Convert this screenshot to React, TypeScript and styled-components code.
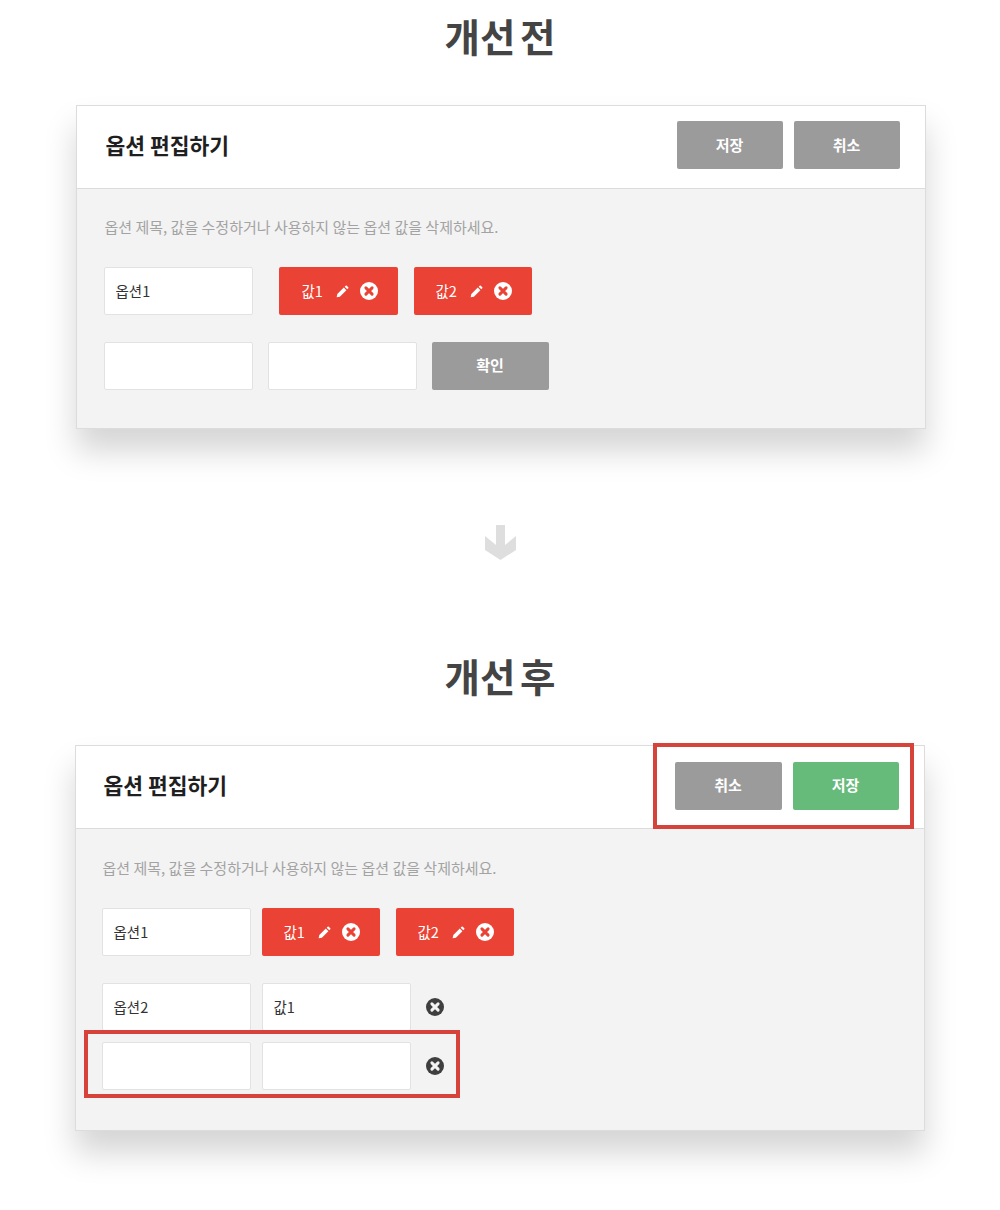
import React from 'react';
import styled, { createGlobalStyle } from 'styled-components';

const GlobalStyle = createGlobalStyle`
  html, body {
    margin: 0;
    padding: 0;
    background: #ffffff;
  }
  body {
    font-family: "Noto Sans CJK KR", "Noto Sans", sans-serif;
  }
`;

const CloseIcon: React.FC<{ $bg: string; $fg: string }> = ({ $bg, $fg }) => (
  <svg width="18" height="18" viewBox="0 0 18 18" style={{ display: 'block', flex: 'none' }}>
    <circle cx="9" cy="9" r="9" fill={$bg} />
    <path d="M5.9 5.9l6.200 6.200M12.100 5.900l-6.200 6.200" stroke={$fg} strokeWidth="3" strokeLinecap="round" />
  </svg>
);

const PencilIcon = () => (
  <svg width="13" height="13" viewBox="0 0 12 12" style={{ display: 'block', flex: 'none' }}>
    <path d="M0.600 11.400l0.600-3 6-6 2.400 2.400-6 6z" fill="#fff" />
    <path d="M8 1.600l0.900-0.900a0.800 0.800 0 0 1 1.100 0l1.300 1.300a0.800 0.800 0 0 1 0 1.100l-0.900 0.900z" fill="#fff" />
  </svg>
);

const ArrowIcon = () => (
  <svg width="31" height="35" viewBox="0 0 31 35" style={{ display: 'block' }}>
    <path d="M11 0h9v20l11-9v14l-15.500 10L0 25V11l11 9z" fill="#dedede" />
  </svg>
);

const OptionChip: React.FC<{ label: string; $width: number; $pad: number }> = ({ label, $width, $pad }) => (
  <Chip $width={$width} $pad={$pad}>
    <ChipLabel>{label}</ChipLabel>
    <PencilIcon />
    <CloseIcon $bg="#ffffff" $fg="#ea4335" />
  </Chip>
);

const DESCRIPTION = '옵션 제목, 값을 수정하거나 사용하지 않는 옵션 값을 삭제하세요.';

const App: React.FC = () => (
  <Page>
    <GlobalStyle />
    <Heading>개선 전</Heading>
    <Panel $shift={1}>
      <PanelHeader $left={29} $lift={4}>
        <PanelTitle>옵션 편집하기</PanelTitle>
        <Actions>
          <ActionButton $color="#9b9b9b">저장</ActionButton>
          <ActionButton $color="#9b9b9b">취소</ActionButton>
        </Actions>
      </PanelHeader>
      <PanelBody $top={25} $left={27} $bottom={38}>
        <Description>{DESCRIPTION}</Description>
        <FieldRow $gap={26} $mt={0}>
          <TextField readOnly value="옵션1" />
          <Chips>
            <OptionChip label="값1" $width={119} $pad={23} />
            <OptionChip label="값2" $width={118} $pad={22} />
          </Chips>
        </FieldRow>
        <FieldRow $gap={15} $mt={27}>
          <TextField readOnly value="" />
          <TextField readOnly value="" />
          <ConfirmButton>확인</ConfirmButton>
        </FieldRow>
      </PanelBody>
    </Panel>

    <ArrowWrap>
      <ArrowIcon />
    </ArrowWrap>

    <Heading $mt={80}>개선 후</Heading>
    <Panel $shift={-1}>
      <PanelHeader $left={28} $lift={3}>
        <PanelTitle>옵션 편집하기</PanelTitle>
        <Actions>
          <ActionButton $color="#9b9b9b" $width={107}>취소</ActionButton>
          <ActionButton $color="#66ba7a">저장</ActionButton>
          <HeaderHighlight />
        </Actions>
      </PanelHeader>
      <PanelBody $top={26} $left={26} $bottom={40}>
        <Description>{DESCRIPTION}</Description>
        <FieldRow $gap={11} $mt={0}>
          <TextField readOnly value="옵션1" />
          <Chips>
            <OptionChip label="값1" $width={118} $pad={22} />
            <OptionChip label="값2" $width={118} $pad={22} />
          </Chips>
        </FieldRow>
        <FieldRow $gap={11} $mt={27}>
          <TextField readOnly value="옵션2" />
          <TextField readOnly value="값1" />
          <RowClose>
            <CloseIcon $bg="#3f3f3f" $fg="#f3f3f3" />
          </RowClose>
        </FieldRow>
        <FieldRow $gap={11} $mt={11}>
          <TextField readOnly value="" />
          <TextField readOnly value="" />
          <RowClose>
            <CloseIcon $bg="#3f3f3f" $fg="#f3f3f3" />
          </RowClose>
          <RowHighlight />
        </FieldRow>
      </PanelBody>
    </Panel>
  </Page>
);

const Page = styled.div`
  width: 1000px;
  height: 1210px;
  overflow: hidden;
  display: flex;
  flex-direction: column;
  align-items: center;
`;

const Heading = styled.h2<{ $mt?: number }>`
  margin: ${props => props.$mt || 0}px 0 33px;
  height: 72px;
  line-height: 70px;
  font-size: 38.5px;
  font-weight: 700;
  word-spacing: -4px;
  color: #444444;
  text-align: center;
`;

const Panel = styled.section<{ $shift: number }>`
  width: 850px;
  box-sizing: border-box;
  margin-left: ${props => props.$shift}px;
  border: 1px solid #dcdcdc;
  background: #f3f3f3;
  box-shadow: 0 22px 30px rgba(0, 0, 0, 0.17);
`;

const PanelHeader = styled.header<{ $left: number; $lift: number }>`
  height: 83px;
  box-sizing: border-box;
  padding: 0 25px ${props => props.$lift}px ${props => props.$left}px;
  display: flex;
  align-items: center;
  justify-content: space-between;
  background: #ffffff;
  border-bottom: 1px solid #dcdcdc;
`;

const PanelTitle = styled.h3`
  margin: -2px 0 0;
  font-size: 21.500px;
  font-weight: 700;
  color: #1f1f1f;
`;

const Actions = styled.div`
  position: relative;
  display: flex;
  gap: 11px;
`;

const ActionButton = styled.button<{ $color: string; $width?: number }>`
  width: ${props => props.$width || 106}px;
  height: 48px;
  padding: 0 0 2px;
  border: 0;
  border-radius: 2px;
  background: ${props => props.$color};
  color: #ffffff;
  font-family: inherit;
  font-size: 15px;
  font-weight: 700;
`;

const HeaderHighlight = styled.div`
  position: absolute;
  left: -22px;
  right: -15px;
  top: -19px;
  bottom: -19px;
  border: 4px solid #d5433a;
`;

const PanelBody = styled.div<{ $top: number; $left: number; $bottom: number }>`
  padding: ${props => props.$top}px 27px ${props => props.$bottom}px ${props => props.$left}px;
`;

const Description = styled.p`
  margin: 0 0 27px;
  padding-left: 1px;
  height: 26px;
  line-height: 26px;
  font-size: 15px;
  color: #a3a3a3;
`;

const FieldRow = styled.div<{ $gap: number; $mt: number }>`
  position: relative;
  display: flex;
  align-items: center;
  gap: ${props => props.$gap}px;
  margin-top: ${props => props.$mt}px;
`;

const TextField = styled.input`
  width: 149px;
  height: 48px;
  box-sizing: border-box;
  padding: 0 11px 2px;
  border: 1px solid #e2e2e2;
  border-radius: 2px;
  background: #ffffff;
  color: #333333;
  font-family: inherit;
  font-size: 14.500px;
  outline: none;
`;

const Chips = styled.div`
  display: flex;
  gap: 16px;
`;

const Chip = styled.div<{ $width: number; $pad: number }>`
  width: ${props => props.$width}px;
  height: 48px;
  box-sizing: border-box;
  padding-left: ${props => props.$pad}px;
  display: flex;
  align-items: center;
  border-radius: 2px;
  background: #ea4335;
  color: #ffffff;
  font-size: 14.500px;

  svg:last-child {
    margin-left: 11px;
  }
`;

const ChipLabel = styled.span`
  width: 34px;
  margin-top: -2px;
`;

const ConfirmButton = styled.button`
  width: 117px;
  height: 48px;
  padding: 0 0 3px;
  border: 0;
  border-radius: 2px;
  background: #9b9b9b;
  color: #ffffff;
  font-family: inherit;
  font-size: 15px;
  font-weight: 700;
`;

const RowClose = styled.div`
  margin-left: 4px;
`;

const RowHighlight = styled.div`
  position: absolute;
  left: -18px;
  top: -12px;
  bottom: -8px;
  width: 376px;
  box-sizing: border-box;
  border: 4px solid #d5433a;
`;

const ArrowWrap = styled.div`
  margin-top: 96px;
  height: 35px;
`;

export default App;
